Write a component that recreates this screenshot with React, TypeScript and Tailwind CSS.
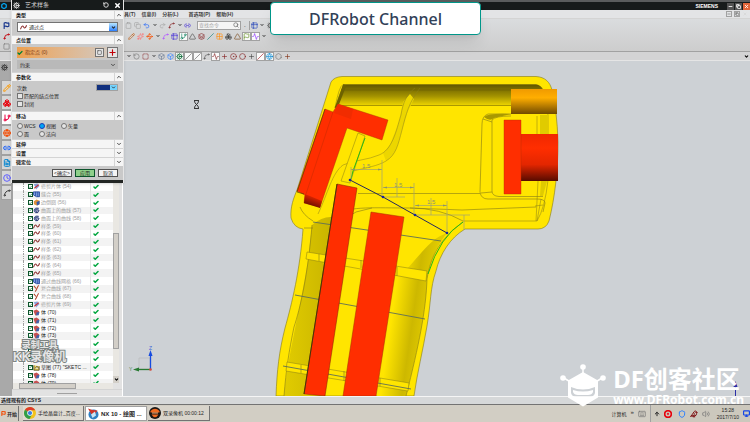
import React from "react";
import clsx from "clsx";
import {
    Activity, ArrowUp, Bird, Box, Boxes, Check, ChevronDown, ChevronUp, Circle, CircleDot, Clipboard, Clock,
    Copy, Cog, Crosshair, FileText, Flag, GitBranch, Globe, Grid2x2, Hexagon, Keyboard, Layers, Link2, Minus,
    Monitor, Pencil, Plus, Redo2, RotateCcw, Search, Shield, Slash, Sparkles, Spline, Square,
    SquareDashed, Table2, Triangle, Undo2, Volume2, Waypoints, X,
} from "lucide-react";

type Tool = {
    icon?: React.ElementType;
    color?: string;
    boxed?: boolean;
    label: string;
};

const caret: Tool = {label: "caret"};

const standardTools: Tool[] = [
    {icon: Clipboard, color: "text-neutral-400", label: "Paste"},
    {icon: Copy, color: "text-neutral-400", label: "Copy"},
    {icon: Undo2, color: "text-blue-600", label: "Undo"},
    caret,
    {icon: Redo2, color: "text-neutral-400", label: "Redo"},
    {icon: Spline, color: "text-red-900", label: "Repeat"},
    caret,
    {icon: Link2, color: "text-indigo-700", label: "Finder"},
];

const curveTools: Tool[] = [
    {icon: Pencil, color: "text-amber-700", label: "Sketch"},
    {icon: Sparkles, color: "text-red-400", label: "Point"},
    {icon: Waypoints, color: "text-orange-600", label: "Curve"},
    caret,
    {icon: Spline, color: "text-purple-500", label: "Spline"},
    {icon: Table2, color: "text-indigo-700", label: "Section"},
    {icon: GitBranch, color: "text-emerald-700", boxed: true, label: "Trim"},
    {icon: Triangle, color: "text-neutral-700", label: "Project"},
    {icon: Layers, color: "text-red-900", label: "Offset"},
    {icon: Slash, color: "text-teal-700", label: "Line"},
    {icon: Grid2x2, color: "text-orange-400", label: "Mesh"},
    {icon: Boxes, color: "text-neutral-700", label: "Bridge"},
    {icon: Triangle, color: "text-yellow-900", label: "Datum"},
    {icon: Flag, color: "text-lime-700", boxed: true, label: "Shape"},
    {icon: Activity, color: "text-violet-600", boxed: true, label: "Comb"},
    caret,
];

const snapTools: Tool[] = [
    caret,
    {icon: RotateCcw, color: "text-neutral-500", label: "Reset"},
    {icon: SquareDashed, color: "text-red-900", label: "Lasso"},
    caret,
    {icon: Box, color: "text-slate-500", label: "Body"},
    {icon: Box, color: "text-blue-500", label: "Solid"},
    {icon: Cog, color: "text-green-800", boxed: true, label: "Snap"},
    {icon: Slash, color: "text-neutral-600", boxed: true, label: "End point"},
    {icon: Slash, color: "text-neutral-600", boxed: true, label: "Mid point"},
    {icon: Spline, color: "text-neutral-600", label: "Control point"},
    {icon: Activity, color: "text-red-900", boxed: true, label: "Pole"},
    {icon: Plus, color: "text-red-900", label: "Intersection"},
    {icon: CircleDot, color: "text-red-900", label: "Arc center"},
    {icon: Circle, color: "text-red-900", label: "Quadrant"},
    {icon: Plus, color: "text-neutral-700", label: "Existing point"},
    {icon: Slash, color: "text-red-800", boxed: true, label: "On curve"},
    {icon: Globe, color: "text-sky-600", boxed: true, label: "On face"},
    {icon: Hexagon, color: "text-neutral-500", label: "Facet"},
    {icon: Plus, color: "text-orange-900", label: "Grid"},
];

const features = [
    {name: "修剪片体 (54)", kind: "face", dim: true},
    {name: "缝合 (55)", kind: "sew", dim: true},
    {name: "边倒圆 (56)", kind: "blend", dim: true},
    {name: "曲面上的曲线 (57)", kind: "surf", dim: true},
    {name: "曲面上的曲线 (58)", kind: "surf", dim: true},
    {name: "样条 (59)", kind: "spline", dim: true},
    {name: "样条 (60)", kind: "spline", dim: true},
    {name: "样条 (61)", kind: "spline", dim: true},
    {name: "样条 (62)", kind: "spline", dim: true},
    {name: "样条 (63)", kind: "spline", dim: true},
    {name: "样条 (64)", kind: "spline", dim: true},
    {name: "样条 (65)", kind: "spline", dim: true},
    {name: "通过曲线网格 (66)", kind: "sew", dim: true},
    {name: "复合曲线 (67)", kind: "curve", dim: true},
    {name: "复合曲线 (68)", kind: "curve", dim: true},
    {name: "修剪片体 (69)", kind: "face", dim: true},
    {name: "体 (70)", kind: "body"},
    {name: "体 (71)", kind: "body"},
    {name: "体 (72)", kind: "body"},
    {name: "体 (73)", kind: "body"},
    {name: "体 (74)", kind: "body"},
    {name: "体 (75)", kind: "body"},
    {name: "体 (76)", kind: "body"},
    {name: "草图 (77) \"SKETC ...", kind: "sketch"},
    {name: "体 (78)", kind: "body"},
    {name: "体 (79)", kind: "body"},
];

const resourceTabs = [
    {icon: Pencil, color: "text-amber-500", label: "Assembly"},
    {icon: Boxes, color: "text-red-600", label: "Constraints"},
    {icon: GitBranch, color: "text-rose-600", label: "Part", active: true},
    {icon: Globe, color: "text-orange-600", label: "Reuse"},
    {icon: Link2, color: "text-blue-600", label: "Web"},
    {icon: FileText, color: "text-sky-600", label: "History"},
    {icon: Clock, color: "text-indigo-500", label: "Clock"},
    {icon: Spline, color: "text-neutral-700", label: "Roles"},
];

function ToolButton({tool}: {tool: Tool}) {
    if (!tool.icon) {
        return (
            <span className="flex w-[7px] justify-center">
                <ChevronDown size={4} strokeWidth={5}/>
            </span>
        );
    }
    const Icon = tool.icon;
    return (
        <button
            aria-label={tool.label}
            className={clsx(
                "flex h-[9px] w-[9px] shrink-0 items-center justify-center",
                tool.color,
                tool.boxed && "border border-neutral-400 bg-neutral-50"
            )}
        >
            <Icon size={7} strokeWidth={2}/>
        </button>
    );
}

function FeatureIcon({kind}: {kind: string}) {
    return (
        <svg viewBox="0 0 16 16" className="size-[7px] shrink-0">
            {kind === "spline" && <path d="M1 12C5 1 7 5 9 8S13 8 15 3" fill="none" stroke="#8c2f2f" strokeWidth="2.4"/>}
            {kind === "curve" && <path d="M2 2L7 8M13 1C9 5 10 9 5 15" fill="none" stroke="#b4462c" strokeWidth="2.4"/>}
            {kind === "sew" && <path d="M1 2h14v11H8L1 9zM6 2v9M11 2v11" fill="#7fa0e0" stroke="#24479f" strokeWidth="2"/>}
            {kind === "blend" && <><path d="M2 5l6-4 7 3v8l-6 3-7-3z" fill="#e0923a"/><path d="M8 7l7-3v8l-6 3z" fill="#3359ac"/></>}
            {kind === "surf" && <path d="M13 3C2 0 0 10 6 13l7-2M6 6l8 2-5 6z" fill="#8090bb" stroke="#303f78" strokeWidth="2"/>}
            {kind === "face" && <><path d="M2 3l8-2 5 6-8 8z" fill="#8aa3df"/><path d="M3 12L13 4" stroke="#cc3434" strokeWidth="2.5"/></>}
            {kind === "body" && <><path d="M1 4l7-3 6 4-2 8-7 2z" fill="#c65050"/><path d="M8 8l7-2-2 8-6 1z" fill="#4361ab"/></>}
            {kind === "sketch" && <path d="M2 3v11h12V5M5 10l4-5 4 5" fill="#ecd45b" stroke="#55471d" strokeWidth="2"/>}
        </svg>
    );
}

function Section({title, open, children}: {title: string; open?: boolean; children?: React.ReactNode}) {
    return (
        <section>
            <h2 className="flex h-[9px] items-center border-t border-neutral-300 bg-neutral-100 pl-[4px] text-[5px] font-bold leading-[8px] text-neutral-900">
                {title}
                <span className="ml-auto flex h-full w-[9px] items-center justify-center border-l border-neutral-300">
                    {open ? <ChevronUp size={6} strokeWidth={3}/> : <ChevronDown size={6} strokeWidth={3}/>}
                </span>
            </h2>
            {children}
        </section>
    );
}

function Option({name, type, label, checked}: {name: string; type: "radio" | "checkbox"; label: string; checked?: boolean}) {
    return (
        <label className="flex h-[8px] items-center gap-px text-[5px] leading-[8px]">
            <input
                type={type}
                name={name}
                defaultChecked={checked}
                className={clsx(
                    "size-[6px] shrink-0 appearance-none border border-neutral-500 bg-neutral-200 checked:border-blue-800 checked:bg-sky-500",
                    type === "radio" && "rounded-full"
                )}
            />
            {label}
        </label>
    );
}

function SplineDialog() {
    return (
        <div role="dialog" aria-label="艺术样条" className="absolute left-[11px] top-0 z-20 w-[113px] border-x border-neutral-200 bg-[#c9c9c9] text-neutral-800 shadow">
            <header className="flex h-[10px] items-center gap-[5px] bg-[#171b1b] pl-px pr-[2px] text-[6px] leading-[10px] text-neutral-300">
                <Cog size={7} strokeWidth={3}/>
                <span>艺术样条</span>
                <button aria-label="Reset" className="ml-auto"><RotateCcw size={6} strokeWidth={4}/></button>
                <button aria-label="Close" className="text-white"><X size={7} strokeWidth={5}/></button>
            </header>
            <Section title="类型" open>
                <div className="h-[16px] px-[5px] py-[3px]">
                    <div className="flex h-[10px] items-center border border-neutral-500 bg-white pl-[2px]">
                        <FeatureIcon kind="spline"/>
                        <select aria-label="类型" className="h-full w-full appearance-none pl-[2px] text-[5px] leading-[8px]">
                            <option>通过点</option>
                        </select>
                        <span className="flex h-full w-[8px] shrink-0 items-center justify-center bg-gradient-to-b from-sky-200 to-blue-500">
                            <ChevronDown size={5} strokeWidth={5}/>
                        </span>
                    </div>
                </div>
            </Section>
            <Section title="点位置" open>
                <div className="h-[28px] px-[5px] pt-[3px]">
                    <div className="flex h-[11px] items-center bg-gradient-to-r from-[#eda04d] to-[#cfccc8] text-[5px]">
                        <Check size={6} strokeWidth={5} className="text-green-700"/>
                        <span className="pl-[2px] text-[#7d3912]">指定点 (0)</span>
                        <button aria-label="Point dialog" className="ml-auto flex size-[9px] items-center justify-center border border-neutral-500 bg-neutral-200 text-neutral-600">
                            <Square size={5} strokeWidth={3}/>
                        </button>
                        <button aria-label="Pick point" className="ml-[3px] flex size-[11px] items-center justify-center border border-neutral-500 bg-neutral-200 text-red-700">
                            <Plus size={9} strokeWidth={3}/>
                        </button>
                    </div>
                    <div className="mt-[2px] flex h-[9px] items-center justify-between bg-[#b9b9b9] pl-[3px] pr-[2px] text-[5px] leading-[8px]">
                        约束 <ChevronDown size={6} strokeWidth={3}/>
                    </div>
                </div>
            </Section>
            <Section title="参数化" open>
                <div className="h-[30px] px-[5px] pt-[2px]">
                    <label className="flex h-[9px] items-center justify-between text-[5px] leading-[8px]">
                        次数
                        <span className="flex h-[7px] w-[22px] border border-neutral-400 bg-white">
                            <input defaultValue="3" className="h-full w-[13px] bg-[#12317f] pl-px text-[5px] leading-[5px] text-[#12317f]"/>
                            <span className="ml-auto flex w-[7px] items-center justify-center bg-sky-300">
                                <ChevronDown size={5} strokeWidth={4}/>
                            </span>
                        </span>
                    </label>
                    <Option type="checkbox" name="match" label="匹配的结点位置"/>
                    <Option type="checkbox" name="closed" label="封闭"/>
                </div>
            </Section>
            <Section title="移动" open>
                <div className="grid h-[19px] grid-cols-[22px_22px_1fr] content-center px-[5px]">
                    <Option type="radio" name="move" label="WCS"/>
                    <Option type="radio" name="move" label="视图" checked/>
                    <Option type="radio" name="move" label="矢量"/>
                    <Option type="radio" name="move" label="面"/>
                    <Option type="radio" name="move" label="法向"/>
                </div>
            </Section>
            <Section title="延伸"/>
            <Section title="设置"/>
            <Section title="微定位"/>
            <footer className="flex h-[14px] items-center justify-end gap-[3px] px-[5px] text-[5px] leading-[6px]">
                <button className="h-[8px] w-[20px] whitespace-nowrap border border-neutral-600 bg-neutral-100">&lt;确定&gt;</button>
                <button className="h-[8px] w-[20px] border border-green-900 bg-[#8fd08a]">应用</button>
                <button className="h-[8px] w-[20px] border border-neutral-600 bg-neutral-100">取消</button>
            </footer>
            <div className="h-[3px] bg-[#232624]"/>
        </div>
    );
}

function PartNavigator() {
    return (
        <aside className="flex w-[111px] shrink-0 flex-col border-r border-white bg-[#e2e2e2]">
            <div className="h-[122px] shrink-0"/>
            <div className="flex min-h-0 flex-1 overflow-hidden border-l border-neutral-400">
                <ul className="flex h-[204px] flex-1 flex-col bg-white">
                    {features.map((f, i) => (
                        <li key={f.name} className={clsx("flex min-h-0 flex-1 items-center text-[5px] leading-[7px]", i % 2 === 0 ? "bg-white" : "bg-[#f3f3f3]")}>
                            <span className="ml-[10px] h-full w-[5px] border-l border-dotted border-neutral-400"/>
                            <span className="flex size-[5px] shrink-0 items-center justify-center border border-green-900 bg-white text-green-700">
                                <Check size={4} strokeWidth={6}/>
                            </span>
                            <FeatureIcon kind={f.kind}/>
                            <span className={clsx("flex-1 whitespace-nowrap pl-px", f.dim ? "text-neutral-400" : "text-neutral-800")}>{f.name}</span>
                            <span className="flex h-full w-[23px] items-center border-l border-neutral-200 pl-[2px] text-green-600">
                                <Check size={6} strokeWidth={6}/>
                            </span>
                        </li>
                    ))}
                </ul>
                <div className="flex w-[6px] flex-col bg-[#e9e7e2]">
                    <div className="h-[50px]"/>
                    <div className="h-[116px] border border-neutral-400 bg-[#d3cfc8]"/>
                    <span className="mt-auto flex h-[7px] items-center justify-center bg-[#d3cfc8]"><ChevronDown size={5} strokeWidth={5}/></span>
                </div>
                <div className="w-[3px]"/>
            </div>
            <div className="mr-[9px] flex h-[6px] shrink-0 border-l border-neutral-400 bg-[#e9e7e2]">
                <div className="ml-[6px] w-[57px] border border-neutral-400 bg-[#d3cfc8]"/>
            </div>
            <div className="flex h-[7px] shrink-0 items-center justify-center border-t border-neutral-300">
                <span className="h-px w-[20px] bg-neutral-400"/>
            </div>
        </aside>
    );
}

function Model() {
    return (
        <svg viewBox="123 61 627 335" preserveAspectRatio="xMinYMin slice" className="absolute inset-0 h-full w-full" fill="none">
            <defs>
                <linearGradient id="roof" x1="0" y1="84" x2="0" y2="106" gradientUnits="userSpaceOnUse">
                    <stop offset="0" stopColor="#5d5300"/>
                    <stop offset=".55" stopColor="#a39200"/>
                    <stop offset="1" stopColor="#f2d900"/>
                </linearGradient>
                <linearGradient id="gripL" x1="286" y1="0" x2="345" y2="0" gradientUnits="userSpaceOnUse">
                    <stop offset="0" stopColor="#e0cb00"/>
                    <stop offset="1" stopColor="#c2ae00"/>
                </linearGradient>
                <linearGradient id="gripR" x1="394" y1="300" x2="429" y2="305" gradientUnits="userSpaceOnUse">
                    <stop offset="0" stopColor="#ffe500"/>
                    <stop offset=".6" stopColor="#cdb800"/>
                    <stop offset="1" stopColor="#e0ca00"/>
                </linearGradient>
                <linearGradient id="pin" x1="0" y1="89" x2="0" y2="114" gradientUnits="userSpaceOnUse">
                    <stop offset="0" stopColor="#f09a00"/>
                    <stop offset=".35" stopColor="#ffae00"/>
                    <stop offset="1" stopColor="#6f4a00"/>
                </linearGradient>
                <linearGradient id="barrel" x1="0" y1="134" x2="0" y2="181" gradientUnits="userSpaceOnUse">
                    <stop offset="0" stopColor="#f02800"/>
                    <stop offset=".3" stopColor="#ff2e00"/>
                    <stop offset=".65" stopColor="#e32600"/>
                    <stop offset="1" stopColor="#560b00"/>
                </linearGradient>
                <linearGradient id="foot" x1="313" y1="196" x2="309" y2="207" gradientUnits="userSpaceOnUse">
                    <stop offset="0" stopColor="#e32600"/>
                    <stop offset="1" stopColor="#5a0c00"/>
                </linearGradient>
            </defs>

            {/* shell */}
            <path
                d="M331 82Q334 77 342 76.500H536C545 77 550 82 552 90Q557 110 558 142C558 170 555 197 549 221Q546 229 538 229H465C450 238 440 254 436 271C430 288 431 303 427 326C423 350 417 374 414 396H276C277 370 279 352 285 328C292 303 300 270 303 229Q294 228 291 218C290 207 294 197 297 190Z"
                fill="#ffe500" stroke="#857a17" strokeWidth=".6"
            />
            <path d="M343 84.500H536Q542 86 543 90L548 115V180Q545 208 537 221H463M343 84.500Q339 86 335 108" stroke="#857a17" strokeWidth=".5"/>
            <path d="M343 84.500H536Q541 85 543 90H511V106H335Z" fill="url(#roof)"/>
            <path d="M341 90H511M336 105.500H511" stroke="#665b00" strokeWidth=".5"/>
            <path d="M345 85L336 108" stroke="#6d6200" strokeWidth="3"/>

            {/* strap over the roof */}
            <path d="M403 102C401 114 396 132 393 137C390 146 386 150 383 153L386 161C396 155 398 145 402 130L408 111L414 99L410 94Z" fill="#ecd600"/>
            <path d="M415 88C407 94 403 102 401 115C396 132 392 150 379 155C368 160 354 160 343 165C332 173 328 193 318 214M353 171C365 168 378 166 386 161C396 155 398 145 402 130C406 114 409 102 420 88" stroke="#8d811c" strokeWidth=".5"/>

            {/* right recess */}
            <path d="M511 114H488Q482 116 482 124L480 192Q481 199 488 199H537Q545 199 545 203L543 212" stroke="#857a17" strokeWidth=".6"/>
            <path d="M492 120V191Q492 196 499 196.500H543M492 120Q495 116 511 116M483 119L492 122M481 193L492 192" stroke="#857a17" strokeWidth=".6"/>
            <path d="M484 117Q488 113 511 114L494 118Q490 122 484 117Z" fill="#a99800"/>
            <path d="M540 115L547 115L548 134H540ZM541 181H547L543 196H540Z" fill="#e0cb00"/>
            <path d="M537 116V134M538 181L536 221M541 199L537 221M535 206L543 205" stroke="#857a17" strokeWidth=".5"/>

            {/* blend lines */}
            <path d="M358 193.500H480M337 214C350 206 375 208 410 208L462 210L536 207M410 208Q440 208 463 221M336 224L356 212L372 208M300 207Q303 215 313 221" stroke="#857a17" strokeWidth=".6"/>

            {/* grip interior */}
            <path d="M312 225Q325 214 337 218L304 396H284C287 360 300 310 308 260Z" fill="url(#gripL)"/>
            <path d="M447 233C435 248 430 262 427 279C426 310 419 345 406 396H377L396 277C412 270 425 240 447 233Z" fill="url(#gripR)"/>
            <path d="M312 225C308 275 300 309 294 327C289 351 286 370 284 396M463 222C440 239 431 255 427 279C426 310 419 345 406 396M304 228H313" stroke="#857a17" strokeWidth=".6"/>
            <path d="M307 252L427 271L426 281L306 259Z" fill="#ffe500" stroke="#857a17" strokeWidth=".5"/>
            <path d="M287 362L409 383L408 391L286 371Z" fill="#ffe500" stroke="#857a17" strokeWidth=".5"/>
            <path d="M319 254V261M361 260V268M397 267V276M301 365V373M344 371V381M380 378V386" stroke="#857a17" strokeWidth=".6"/>
            <path d="M313 222L441 241M295 295L425 319M283 366L411 389" stroke="#5f6e58" strokeWidth=".9"/>

            {/* side rib */}
            <path d="M358 133L365 136L350 183L341 181Z" fill="#ffe500" stroke="#857a17" strokeWidth=".5"/>

            {/* solids */}
            <path d="M325 109L333 112L338 104L388 120L382 140L347 128L320 207L304 203L305 195L297 191Z" fill="#ff2e00" stroke="#a03200" strokeWidth=".4"/>
            <path d="M338 104L353 109L351 119L334 113Z" fill="#f12c00"/>
            <path d="M305 194L322 201L320 208L304 203Z" fill="url(#foot)"/>
            <path d="M333 112L306 194" stroke="#c42b00" strokeWidth=".5"/>
            <path d="M325 109L297 192L304 194" stroke="#5f3a00" strokeWidth=".7"/>
            <path d="M337 184L357 188L325 396L304 394Z" fill="#ff2e00" stroke="#7c2500" strokeWidth=".5"/>
            <path d="M337 184L304 394" stroke="#46350a" strokeWidth="1"/>
            <path d="M371 212L404 217L376 396H343Z" fill="#ff2e00" stroke="#a03200" strokeWidth=".5"/>
            <path d="M511 89H557V114H511Z" fill="url(#pin)"/>
            <path d="M521 134H558V181H521Z" fill="url(#barrel)"/>
            <path d="M504 120H521V194H504Z" fill="#ff2e00" stroke="#b03000" strokeWidth=".4"/>

            {/* art spline and dimensions */}
            <path d="M365 138L353 171L351 179" stroke="#25bb16" strokeWidth="1"/>
            <path d="M463 222Q440 236 428 274" stroke="#25bb16" strokeWidth="1"/>
            <path d="M351 167V179M382 160V197M351 169.500H382M383 187.500H414M414 183V215M397 178V197M383 197H405M415 205.500H447M447 201V233M415 215H470M431 198V215M464 215V230" stroke="#9da276" strokeWidth=".7"/>
            <path d="M351 169.500l4-1v2zM382 169.500l-4-1v2zM383 187.500l4-1v2zM414 187.500l-4-1v2zM415 205.500l4-1v2zM447 205.500l-4-1v2z" fill="#8e9467"/>
            <g fill="#8e946c" fontFamily="Liberation Sans" fontSize="6">
                <text x="362" y="168">1.5</text>
                <text x="394" y="187">1.5</text>
                <text x="427" y="204">1.5</text>
            </g>
            <path d="M350 180L383 197L415 215L447 233" stroke="#25285e" strokeWidth="1"/>
            <g fill="#16249a">
                <circle cx="350" cy="180" r="1.300"/>
                <circle cx="383" cy="197" r="1.300"/>
                <circle cx="415" cy="215" r="1.300"/>
                <circle cx="447" cy="233" r="1.300"/>
            </g>

            {/* busy cursor */}
            <path d="M194 100.500h5M194 108.500h5M194.500 101q0 2 2 3.500q-2 1.500-2 3.500M198.500 101q0 2-2 3.500q2 1.500 2 3.500" stroke="#222" strokeWidth=".9"/>

            {/* view triad */}
            <path d="M139 358h11v11h-11z" stroke="#b5bbb9" strokeWidth=".6"/>
            <path d="M150.500 369V353" stroke="#164be0" strokeWidth="1.300"/>
            <path d="M150.500 350l-2 6h4z" fill="#164be0"/>
            <path d="M150 369.500H138" stroke="#287a32" strokeWidth="1.300"/>
            <path d="M133 369.500l6-2v4z" fill="#287a32"/>
            <circle cx="150.500" cy="369.500" r="1.300" fill="#d34b3a"/>
            <g fontFamily="Liberation Sans" fontSize="5">
                <text x="149" y="350" fill="#3d67d8">Z</text>
                <text x="129" y="371" fill="#4c8352">Y</text>
            </g>

            {/* clip handle behind the site logo */}
            <path d="M735.500 396V386" stroke="#2a2fa8" strokeWidth="1"/>
            <path d="M735.500 381l-2 6h4z" fill="#2a2fa8"/>
        </svg>
    );
}

function Watermark() {
    return (
        <div className="absolute bottom-[15px] right-[6px] z-30 flex items-center gap-[7px] text-white">
            <svg viewBox="0 0 46 43" className="h-[43px] w-[46px]" fill="currentColor">
                <path fillRule="evenodd" d="M23 8l15 8.500v17L23 42.500l-15-9v-17zM11 23v6q1 4 6 4h12q5 0 6-4v-6q-12 5-24 0z"/>
                <path d="M13 26q10 3 20 0v2q-1 3-5 3H18q-4 0-5-3z"/>
                <path d="M23 3v7M4 14l8 5M42 14l-8 5" stroke="currentColor" strokeWidth="1.500"/>
                <circle cx="23" cy="3" r="2.800"/>
                <circle cx="3" cy="14" r="2.800"/>
                <circle cx="43" cy="14" r="2.800"/>
            </svg>
            <div className="font-['Noto_Sans','Noto_Sans_CJK_SC',sans-serif] font-bold">
                <p className="text-[24px] leading-[28px]">DF创客社区</p>
                <p className="text-[12px] leading-[14px]">www.DFRobot.com.cn</p>
            </div>
        </div>
    );
}

function Taskbar() {
    return (
        <footer className="flex h-[18px] shrink-0 items-center gap-px border-t border-neutral-500 bg-[#d2cec4] text-[6px] leading-[16px] text-neutral-800">
            <button className="flex h-[15px] w-[19px] items-center gap-px border-r border-neutral-500 pl-px text-[5px] font-bold">
                <Flag size={5} strokeWidth={5} className="shrink-0 text-orange-600"/>开始
            </button>
            <button className="ml-[3px] flex h-[15px] w-[61px] items-center gap-[2px] border-b border-r border-neutral-500 bg-[#dedad2] pl-px">
                <svg viewBox="0 0 24 24" className="size-[12px] shrink-0">
                    <circle cx="12" cy="12" r="12" fill="#f2c21c"/>
                    <path d="M12 12L2 5.500A12 12 0 0 1 22.500 6.500H12z" fill="#dc3c2b"/>
                    <path d="M12 12L2 5.500A12 12 0 0 0 11 24l5-9z" fill="#2f9d4c"/>
                    <circle cx="12" cy="12" r="5.500" fill="#fff"/>
                    <circle cx="12" cy="12" r="4.200" fill="#3c7fe0"/>
                </svg>
                <span className="whitespace-nowrap text-[5px]">手绘晶盘计_百度...</span>
            </button>
            <button className="flex h-[15px] w-[62px] items-center gap-[2px] border border-neutral-400 bg-white pl-px font-bold">
                <svg viewBox="0 0 24 24" className="size-[12px] shrink-0">
                    <circle cx="13" cy="13" r="10" fill="#2e7fc2"/>
                    <path d="M2 1l9 3 10 1-5 7-3 7-5-8z" fill="#cf3328"/>
                    <path d="M8 13l8-6 2 8-7 5z" fill="#c8e5f5"/>
                </svg>
                <span className="whitespace-nowrap">NX 10 - 绘图 ...</span>
            </button>
            <button className="flex h-[15px] w-[62px] items-center gap-[2px] border-b border-r border-neutral-500 bg-[#d8d4cb] pl-px">
                <svg viewBox="0 0 24 24" className="size-[12px] shrink-0">
                    <circle cx="12" cy="12" r="12" fill="#191716"/>
                    <path d="M3 8q9-9 18 0v3H3zM5 15h14q-7 11-14 0z" fill="#ef6a21"/>
                    <path d="M6 12h12" stroke="#ffb37a" strokeWidth="2"/>
                </svg>
                <span className="whitespace-nowrap text-[5px]">双录像机 00:00:12</span>
            </button>
            <div className="ml-auto flex items-center gap-[4px]">
                <span className="text-[5px]">计算机</span>
                <span className="-mt-1 text-[6px]">»</span>
                <Keyboard size={8} className="text-neutral-500"/>
            </div>
            <div className="ml-[3px] flex h-full items-center gap-[4px] border-l border-neutral-400 bg-[#ccc8bd] pl-[3px]">
                <ArrowUp size={6} strokeWidth={4}/>
                <CircleDot size={8} strokeWidth={5} className="text-red-600"/>
                <Shield size={8} strokeWidth={3} className="ml-[2px] text-blue-500"/>
                <Bird size={8} strokeWidth={3} className="text-red-900"/>
                <Volume2 size={8} strokeWidth={2} className="text-neutral-500"/>
                <span className="ml-[3px] text-center text-[5px] leading-[7px]">15:28<br/>2017/7/10</span>
                <Monitor size={7} strokeWidth={4} className="text-blue-700"/>
            </div>
        </footer>
    );
}

export default function App() {
    return (
        <div className="relative flex h-screen w-full flex-col overflow-hidden bg-[#d9dbdd] font-['Liberation_Sans','Noto_Sans_CJK_SC',sans-serif] text-[6px]">
            <header className="flex h-[10px] shrink-0 items-center border-t-2 border-[#5a5c5d] bg-[#171b1b] text-white">
                <span className="ml-px">
                    <Hexagon size={6} strokeWidth={5} className="text-sky-500"/>
                </span>
                <span className="ml-auto text-[5px] font-bold leading-[8px]">SIEMENS</span>
                <div className="ml-[9px] flex gap-px">
                    <button aria-label="Minimize" className="flex size-[7px] items-center justify-center bg-neutral-600"><Minus size={5} strokeWidth={4}/></button>
                    <button aria-label="Restore" className="flex size-[7px] items-center justify-center bg-neutral-600"><Copy size={5} strokeWidth={4}/></button>
                    <button aria-label="Close" className="flex size-[7px] items-center justify-center bg-[#e2663a]"><X size={5} strokeWidth={4}/></button>
                </div>
            </header>

            <nav className="flex h-[9px] shrink-0 items-center border-b border-neutral-300 bg-[#e3e4e6] pl-[124px] text-[5px] font-bold leading-[8px] text-neutral-700">
                <div className="flex gap-[6px]">
                    <a href="#tools">具(T)</a>
                    <a href="#info">信息(I)</a>
                    <a href="#analysis">分析(L)</a>
                    <a href="#prefs" className="pl-[4px]">首选项(P)</a>
                    <a href="#help">帮助(H)</a>
                </div>
                <div className="ml-auto flex gap-[2px] pr-[2px] text-neutral-500">
                    <button aria-label="Minimize part" className="flex size-[6px] items-center justify-center border border-neutral-400"><Minus size={4} strokeWidth={4}/></button>
                    <button aria-label="Restore part" className="flex size-[6px] items-center justify-center border border-neutral-400"><Copy size={4} strokeWidth={4}/></button>
                    <button aria-label="Close part" className="flex size-[6px] items-center justify-center text-neutral-300"><X size={4} strokeWidth={4}/></button>
                </div>
            </nav>

            <div className="flex h-[33px] shrink-0 flex-col border-b border-neutral-400 bg-gradient-to-b from-[#dadcde] to-[#cdcdcd]">
                <div className="flex h-[12px] items-center">
                    <span className="flex w-[124px] pl-[3px] text-blue-900"><Flag size={7} strokeWidth={4}/></span>
                    <div className="flex items-center">
                        {standardTools.map((t, i) => <ToolButton key={i} tool={t}/>)}
                    </div>
                    <label className="ml-[5px] flex h-[9px] w-[44px] items-center border border-neutral-400 bg-neutral-100 pr-px">
                        <input placeholder="查找命令" aria-label="查找命令" className="h-full w-full min-w-0 pl-px text-[5px] leading-[7px] placeholder:text-neutral-400"/>
                        <Search size={6} strokeWidth={3} className="shrink-0 text-neutral-500"/>
                    </label>
                    <span className="mx-[3px]">.</span>
                    <span className="h-[9px] w-px bg-neutral-400"/>
                    <div className="flex items-center">
                        <ToolButton tool={{icon: Table2, color: "text-blue-800", label: "Window"}}/>
                        <ToolButton tool={caret}/>
                        <ToolButton tool={{icon: Cog, color: "text-neutral-600", label: "Options"}}/>
                    </div>
                </div>
                <div className="flex h-[10px] items-center">
                    <span className="flex w-[127px] pl-[3px] text-red-700"><Spline size={7} strokeWidth={3}/></span>
                    {curveTools.map((t, i) => <ToolButton key={i} tool={t}/>)}
                </div>
                <div className="flex h-[10px] items-center pl-[3px] text-neutral-500"><Square size={7} strokeWidth={2}/></div>
            </div>

            <div className="flex h-[9px] shrink-0 items-center border-b border-neutral-200 bg-[#d3d3d4] pl-[125px]">
                {snapTools.map((t, i) => <ToolButton key={i} tool={t}/>)}
                <span className="ml-auto pr-px"><ChevronDown size={5} strokeWidth={5}/></span>
            </div>

            <main className="flex min-h-0 flex-1">
                <div className="flex w-[12px] shrink-0 flex-col items-end bg-[#a9a9a9]">
                    <span className="flex h-[19px] w-full items-start pl-px pt-[3px] text-neutral-700"><Cog size={7} strokeWidth={3}/></span>
                    {resourceTabs.map(({icon: Icon, color, label, active}) => (
                        <button
                            key={label}
                            aria-label={label}
                            className={clsx("flex h-[15px] w-[11px] items-center justify-center border border-neutral-400", active ? "bg-white" : "bg-[#d6d6d6]", color)}
                        >
                            <Icon size={8} strokeWidth={3}/>
                        </button>
                    ))}
                </div>
                <PartNavigator/>
                <div className="relative min-w-0 flex-1 overflow-hidden bg-[#cdd1d5]">
                    <Model/>
                </div>
            </main>

            <div className="flex h-[8px] shrink-0 items-center border-t border-neutral-100 bg-[#d6d8d9] pl-px text-[5px] font-bold leading-[7px] text-neutral-900">
                选择现有的 CSYS
            </div>
            <Taskbar/>

            <SplineDialog/>

            {/* recorder stamp */}
            <div className="absolute bottom-[59px] left-[13px] z-10 text-center font-bold leading-[12px] text-neutral-200 [-webkit-text-stroke:2px_#7d8482] [paint-order:stroke_fill]">
                <p className="text-[9px]">录制工具</p>
                <p className="text-[12px]">KK录像机</p>
            </div>

            <div className="absolute left-[270px] top-[2px] z-30 flex h-[33px] w-[211px] items-center justify-center rounded-[4px] border border-teal-600 bg-white shadow-lg">
                <h1 className="font-['Noto_Sans',sans-serif] text-[16px] font-medium leading-[20px] text-slate-700">DFRobot Channel</h1>
            </div>
            <Watermark/>
        </div>
    );
}
